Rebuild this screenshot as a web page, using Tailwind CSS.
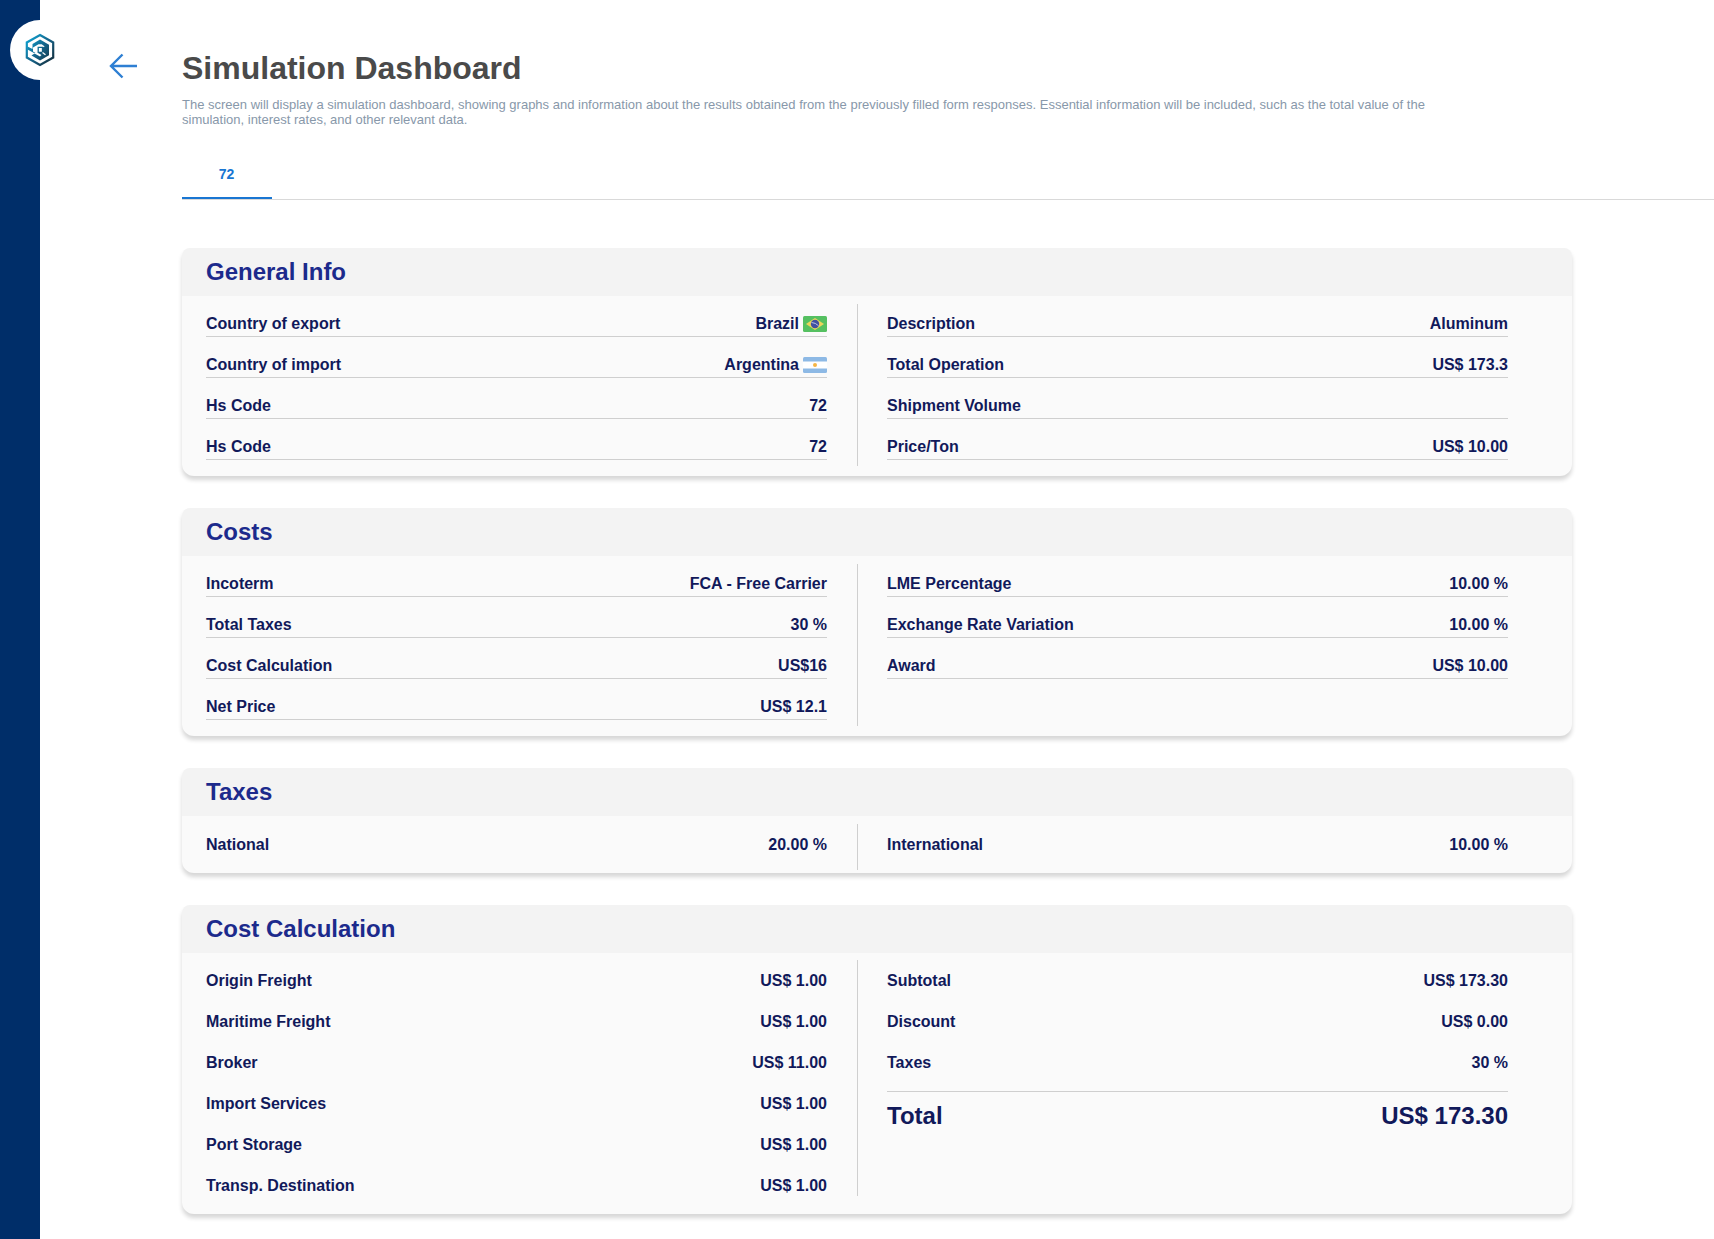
<!DOCTYPE html>
<html lang="en">
<head>
<meta charset="utf-8">
<title>Simulation Dashboard</title>
<script src="https://cdn.jsdelivr.net/npm/@tailwindcss/browser@4"></script>
</head>
<body class="bg-white font-['Liberation_Sans',Arial,sans-serif] text-[#11195a] overflow-hidden">
<div class="flex h-[1239px] overflow-hidden">
  <aside class="relative w-10 shrink-0 bg-[#002e69]">
    <div class="absolute left-[10px] top-5 flex size-[60px] items-center justify-center rounded-full bg-white">
      <svg class="h-[34px] w-[30px]" viewBox="0 0 30 34" fill="none">
        <defs><linearGradient id="g" gradientUnits="userSpaceOnUse" x1="2" y1="6" x2="28" y2="28"><stop offset="0" stop-color="#0ea0cf"/><stop offset=".5" stop-color="#15648a"/><stop offset="1" stop-color="#15303f"/></linearGradient></defs>
        <path d="M15 2 28.200 9.500v15L15 32 1.800 24.500v-15Z" stroke="url(#g)" stroke-width="2.200"/>
        <path d="M15 6.500 24 11.700v10.600l-9 5.200-8.500-4.900 3-2.100 5.500 3 1.500-1.500-3.500-2H9L2.500 16.500v-3l5 2.500v-5Z" fill="url(#g)"/>
        <path d="M8 14.500l5.500-3.200h3.200l3 2.200-3 1.200h-3.200v5.300h-3L8 18.500Z" fill="#fff"/>
        <path d="M13.200 14.300h4.300v5h-4.300z" fill="#fff" stroke="url(#g)" stroke-width="1.300"/>
        <path d="M17.500 19.500l3 2.200" stroke="#fff" stroke-width="1.300"/>
      </svg>
    </div>
  </aside>
  <main class="flex grow pl-[69px]">
    <svg class="mt-[53px] mr-11 h-[26px] w-[29px] shrink-0" viewBox="0 0 29 26" fill="none" stroke="#2e7fd3" stroke-width="2.4"><path d="M28 13H2.500M13.500 1.500 2 13l11.500 11.500"/></svg>
    <div class="grow">
      <h1 class="mt-[50px] text-[32px] leading-[37px] font-bold text-[#4a4a4a]">Simulation Dashboard</h1>
      <p class="mt-[10px] w-[1250px] text-[13px] leading-[15px] text-[#8898aa]">The screen will display a simulation dashboard, showing graphs and information about the results obtained from the previously filled form responses. Essential information will be included, such as the total value of the simulation, interest rates, and other relevant data.</p>
      <nav class="mt-[23px] flex h-[50px] border-b border-[#d9d9d9]">
        <div class="flex h-[49px] w-[90px] items-center justify-center border-b-2 border-[#1976d2] pt-[2px] pr-px text-[14px] font-bold text-[#1976d2]">72</div>
      </nav>
      <div id="cards" class="mt-12 flex w-[1390px] flex-col gap-8"></div>
    </div>
  </main>
</div>
<script>
const brazil = '<svg class="ml-1 h-4 w-6" viewBox="0 0 24 16"><rect width="24" height="16" rx="1.5" fill="#55c061"/><path d="M12 2l9 6-9 6-9-6z" fill="#ecd45c"/><circle cx="12" cy="8" r="4.200" fill="#4150a0"/><path d="M8.500 6.500q4 .2 7 3.200" stroke="#b9c4e6" fill="none"/></svg>';
const argentina = '<svg class="ml-1 h-4 w-6" viewBox="0 0 24 16"><rect width="24" height="16" rx="1.500" fill="#8db9e5"/><path d="M0 4.500h24v7H0z" fill="#fff"/><circle cx="12" cy="8" r="2" fill="#f6b545"/></svg>';
const cards = [
  { title: 'General Info', body: 'h-[180px]', split: 'h-[162px]', line: 'border-[#cfcfcf]', pad: '',
    left: [['Country of export', 'Brazil' + brazil], ['Country of import', 'Argentina' + argentina], ['Hs Code', '72'], ['Hs Code', '72']],
    right: [['Description', 'Aluminum'], ['Total Operation', 'US$ 173.3'], ['Shipment Volume', ''], ['Price/Ton', 'US$ 10.00']] },
  { title: 'Costs', body: 'h-[180px]', split: 'h-[162px]', line: 'border-[#cfcfcf]', pad: '',
    left: [['Incoterm', 'FCA - Free Carrier'], ['Total Taxes', '30 %'], ['Cost Calculation', 'US$16'], ['Net Price', 'US$ 12.1']],
    right: [['LME Percentage', '10.00 %'], ['Exchange Rate Variation', '10.00 %'], ['Award', 'US$ 10.00']] },
  { title: 'Taxes', body: 'h-[57px]', split: 'h-[46px]', line: 'border-transparent', pad: 'pt-px',
    left: [['National', '20.00 %']], right: [['International', '10.00 %']] },
  { title: 'Cost Calculation', body: 'h-[261px]', split: '-mt-px h-[236px]', line: 'border-transparent', pad: '',
    left: [['Origin Freight', 'US$ 1.00'], ['Maritime Freight', 'US$ 1.00'], ['Broker', 'US$ 11.00'], ['Import Services', 'US$ 1.00'], ['Port Storage', 'US$ 1.00'], ['Transp. Destination', 'US$ 1.00']],
    right: [['Subtotal', 'US$ 173.30'], ['Discount', 'US$ 0.00'], ['Taxes', '30 %']], total: 'US$ 173.30' },
];
const row = (r, c) => `<div class="flex h-[33px] items-end justify-between border-b ${c.line} pb-[2px] text-[16px] leading-5 font-bold"><span>${r[0]}</span><span class="flex items-center">${r[1]}</span></div>`;
const col = (rows, c) => `<div class="flex w-[621px] flex-col gap-2 ${c.pad}">${rows.map(r => row(r, c)).join('')}`;
document.getElementById('cards').innerHTML = cards.map(c => `
  <section class="overflow-hidden rounded-t-[8px] rounded-b-[12px] bg-[#fafafa] shadow-[0_4px_4px_rgba(0,0,0,0.16)]">
    <h2 class="h-12 bg-[#f3f3f3] pl-6 text-[24px] leading-[48px] font-bold text-[#1c2a8c]">${c.title}</h2>
    <div class="flex pl-6 pt-2 ${c.body}">
      ${col(c.left, c)}</div>
      <div class="mr-[29px] ml-[30px] w-px bg-[#cfcfcf] ${c.split}"></div>
      ${col(c.right, c)}${c.total ? `<div class="mt-[7px] flex justify-between border-t border-[#cfcfcf] pt-[10px] text-[24px] leading-7 font-bold"><span>Total</span><span>${c.total}</span></div>` : ''}</div>
    </div>
  </section>`).join('');
</script>
</body>
</html>
